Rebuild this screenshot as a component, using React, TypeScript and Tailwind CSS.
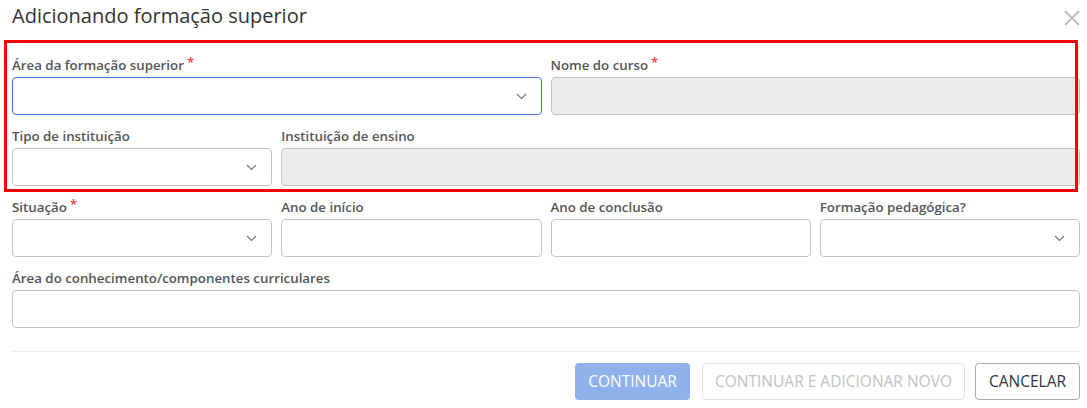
import React from "react";

const Chevron = () => (
  <svg width="11" height="7" viewBox="0 0 11 7" className="shrink-0">
    <path d="M1 1 L5.5 5.5 L10 1" fill="none" stroke="#777" strokeWidth="1.1" />
  </svg>
);

const Label = ({ text, req }: { text: string; req?: boolean }) => (
  <div className="h-[18px] mb-[3px] text-[13.3px] leading-[18px] font-semibold text-[#555] whitespace-nowrap">
    {text}
    {req && <span className="text-[#e53935] ml-[3px] relative top-[-3px]">*</span>}
  </div>
);

const Select = ({ focus }: { focus?: boolean }) => (
  <div
    className={`h-[38px] rounded-[4px] border bg-white flex items-center justify-end pr-[14px] ${
      focus ? "border-[#3b7ad9]" : "border-[#c4c4c4]"
    }`}
  >
    <Chevron />
  </div>
);

const Input = ({ disabled }: { disabled?: boolean }) => (
  <div
    className={`h-[38px] rounded-[4px] border border-[#c4c4c4] ${disabled ? "bg-[#ececec]" : "bg-white"}`}
  />
);

export default function App() {
  return (
    <div
      className="relative w-[1087px] h-[408px] bg-white overflow-hidden"
      style={{ fontFamily: '"Open Sans", "Noto Sans", sans-serif' }}
    >
      <div className="pl-[12px] pr-[7px] pt-[2px] h-[40px] flex items-start justify-between">
        <h1 className="text-[20px] leading-[28px] text-[#333] font-normal">Adicionando formação superior</h1>
        <svg width="16" height="16" viewBox="0 0 16 16" className="mt-[8px]">
          <path d="M1 1 L15 15 M15 1 L1 15" stroke="#bdbdbd" strokeWidth="1.8" />
        </svg>
      </div>

      <div className="pl-[12px] pr-[7px] pt-[16px] grid grid-cols-4 gap-x-[9px] gap-y-[12px]">
        <div className="col-span-2">
          <Label text="Área da formação superior" req />
          <Select focus />
        </div>
        <div className="col-span-2">
          <Label text="Nome do curso" req />
          <Input disabled />
        </div>
        <div>
          <Label text="Tipo de instituição" />
          <Select />
        </div>
        <div className="col-span-3">
          <Label text="Instituição de ensino" />
          <Input disabled />
        </div>
        <div>
          <Label text="Situação" req />
          <Select />
        </div>
        <div>
          <Label text="Ano de início" />
          <Input />
        </div>
        <div>
          <Label text="Ano de conclusão" />
          <Input />
        </div>
        <div>
          <Label text="Formação pedagógica?" />
          <Select />
        </div>
        <div className="col-span-4">
          <Label text="Área do conhecimento/componentes curriculares" />
          <Input />
        </div>
      </div>

      <div className="ml-[12px] mr-[7px] mt-[23px] border-t border-[#ececec]" />

      <div className="pr-[7px] pt-[11px] flex justify-end items-center">
        <button className="h-[37px] w-[115px] rounded-[4px] bg-[#8fb1ec] text-white text-[15.5px] leading-none">
          CONTINUAR
        </button>
        <button className="ml-[12px] h-[37px] w-[263px] rounded-[4px] border border-[#e2e2e2] bg-white text-[#c2c2c2] text-[15.5px] leading-none">
          CONTINUAR E ADICIONAR NOVO
        </button>
        <button className="ml-[10px] h-[37px] w-[105px] rounded-[4px] border border-[#aaa] bg-white text-[#333] text-[15.5px] leading-none">
          CANCELAR
        </button>
      </div>

      <div className="absolute left-[4px] top-[40px] w-[1074px] h-[152px] border-[3px] border-[#ff0000] pointer-events-none" />
    </div>
  );
}
